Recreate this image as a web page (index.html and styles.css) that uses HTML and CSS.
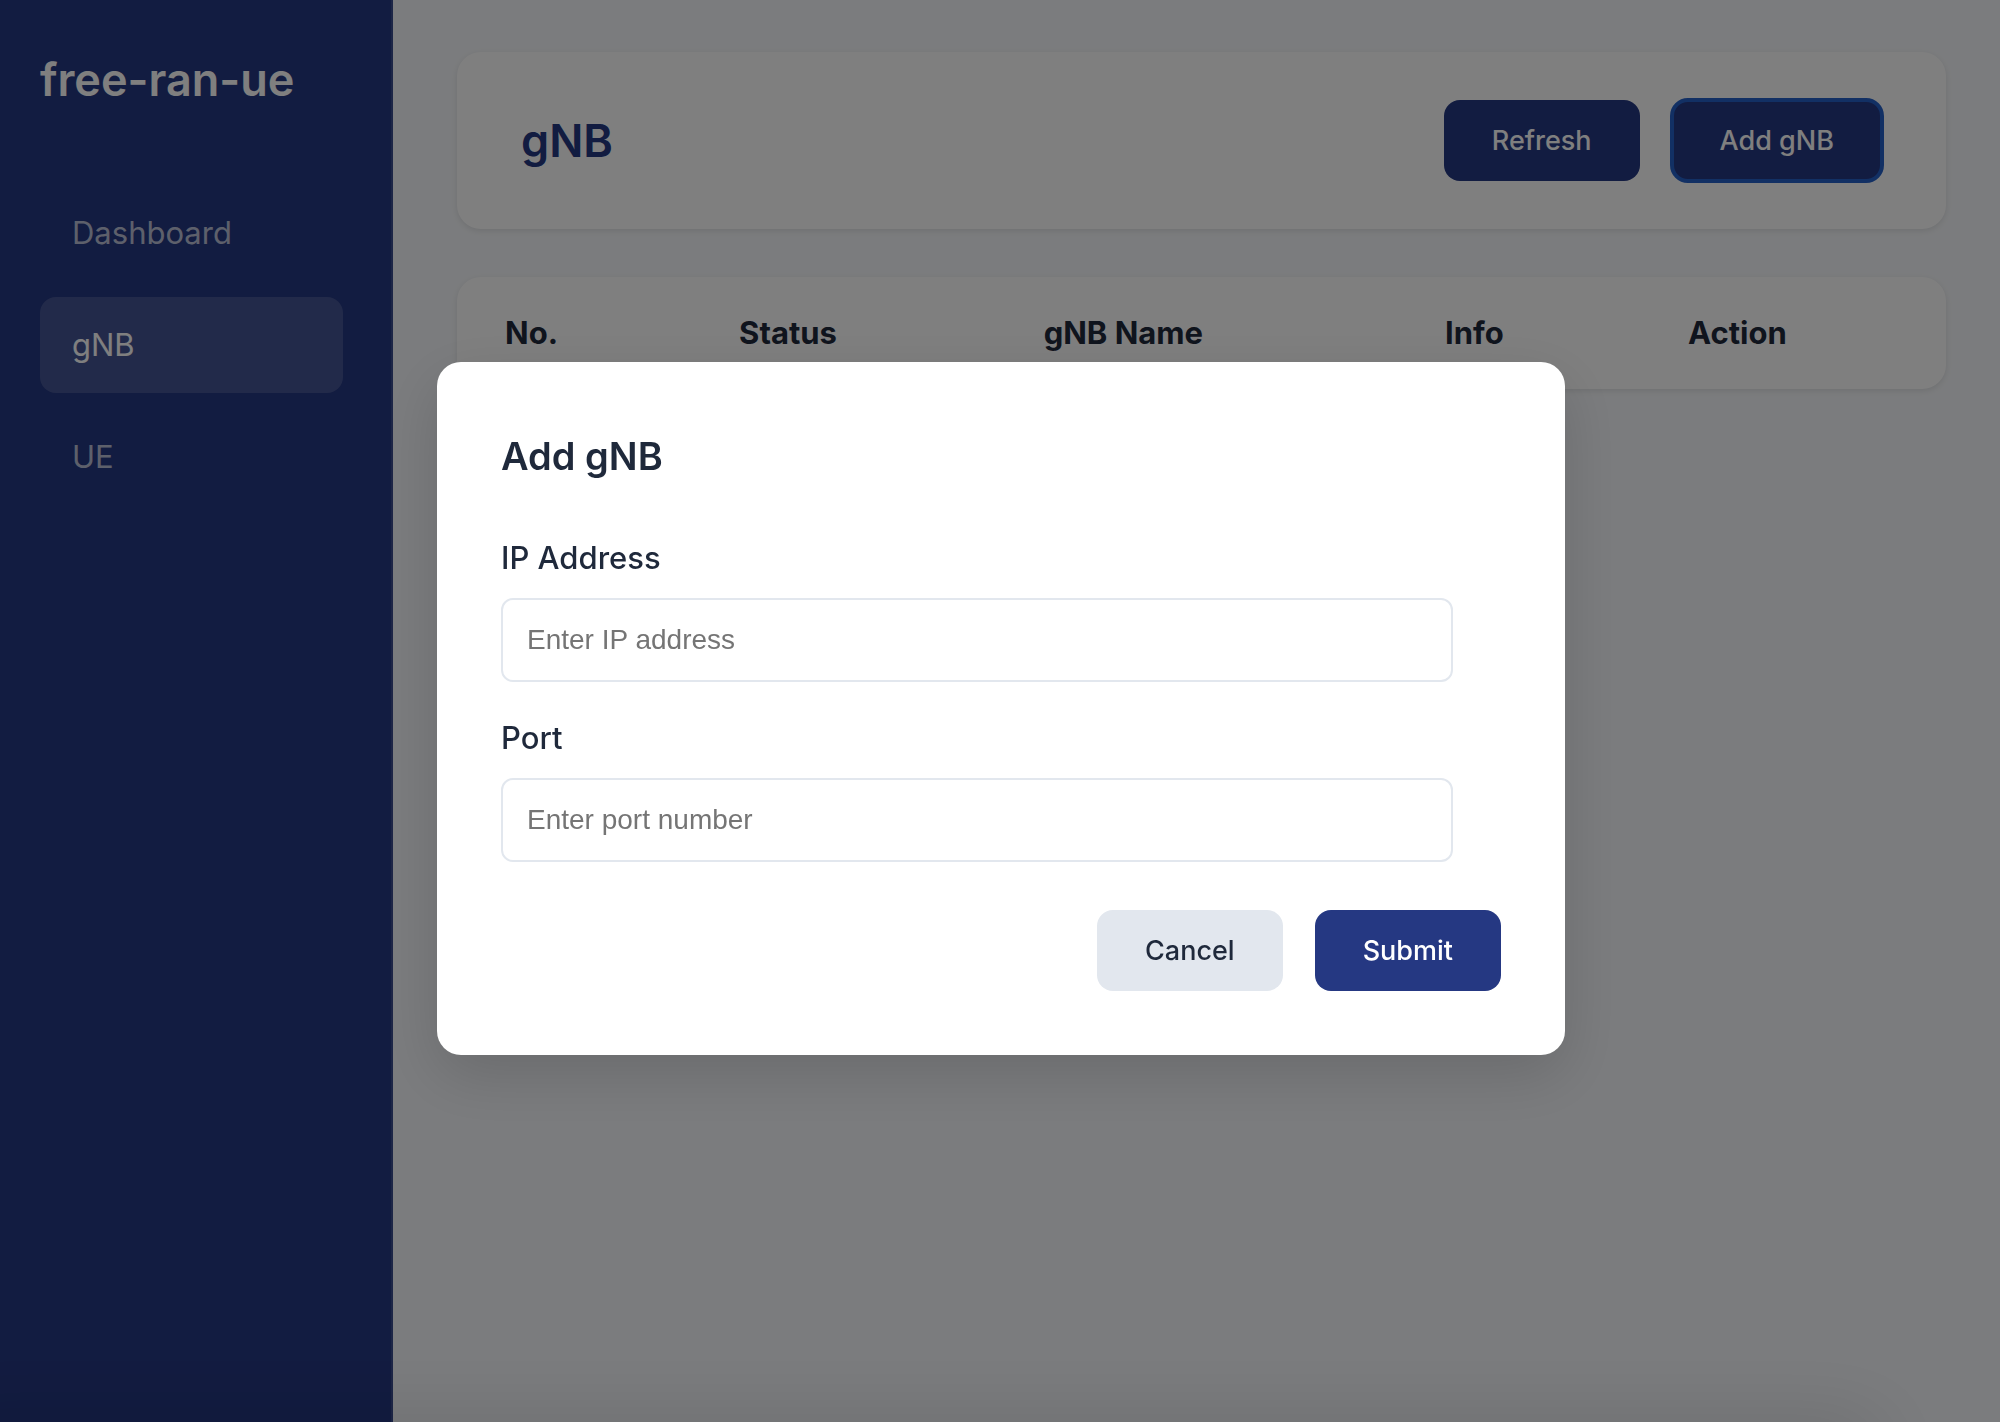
FILE: index.html
```html
<!DOCTYPE html>
<html lang="en">
<head>
  <meta charset="utf-8">
  <meta name="viewport" content="width=device-width, initial-scale=1">
  <title>free-ran-ue</title>
  <link rel="stylesheet" href="styles.css">
</head>
<body>
  <div class="app">
    <aside class="sidebar">
      <h2 class="brand">free-ran-ue</h2>
      <nav class="nav">
        <a class="nav-item" href="#dashboard">Dashboard</a>
        <a class="nav-item active" href="#gnb" aria-current="page">gNB</a>
        <a class="nav-item" href="#ue">UE</a>
      </nav>
    </aside>
    <main class="content">
      <header class="card page-header">
        <h1 class="page-title">gNB</h1>
        <div class="header-actions">
          <button class="button primary" type="button">Refresh</button>
          <button class="button primary focused" type="button">Add gNB</button>
        </div>
      </header>
      <section class="card">
        <table class="table">
          <thead>
            <tr>
              <th scope="col">No.</th>
              <th scope="col">Status</th>
              <th scope="col">gNB Name</th>
              <th scope="col">Info</th>
              <th scope="col">Action</th>
            </tr>
          </thead>
          <tbody></tbody>
        </table>
      </section>
    </main>
  </div>

  <div class="overlay">
    <form class="modal" role="dialog" aria-modal="true" aria-labelledby="modal-title">
      <h3 class="modal-title" id="modal-title">Add gNB</h3>
      <div class="field">
        <label for="ip">IP Address</label>
        <input id="ip" type="text" placeholder="Enter IP address">
      </div>
      <div class="field">
        <label for="port">Port</label>
        <input id="port" type="text" placeholder="Enter port number">
      </div>
      <div class="modal-actions">
        <button class="button secondary" type="button">Cancel</button>
        <button class="button primary" type="submit">Submit</button>
      </div>
    </form>
  </div>
</body>
</html>
```

FILE: styles.css
```css
:root {
  --primary: #253882;
  --text: #1f293b;
  --border: #e2e7ee;
  --background: #f7f9fc;
}

body {
  margin: 0;
  font-family: Inter, "Liberation Sans", sans-serif;
  font-size: 31px;
  line-height: 48px;
  color: var(--text);
  background: var(--background);
}

h1,
h2,
h3 {
  margin: 0;
  font-weight: 600;
}

.app {
  display: flex;
  min-height: 100vh;
}

/* Sidebar */
.sidebar {
  box-sizing: border-box;
  flex: 0 0 393px;
  padding: 44px 48px 44px 40px;
  color: #fff;
  background: var(--primary);
  border-right: 2px solid rgba(255, 255, 255, 0.1);
}

.brand {
  margin-bottom: 69px;
  font-size: 45px;
  line-height: 72px;
}

.nav {
  display: flex;
  flex-direction: column;
  gap: 16px;
}

.nav-item {
  padding: 24px 32px;
  color: rgba(255, 255, 255, 0.7);
  text-decoration: none;
  border-radius: 16px;
}

.nav-item.active {
  color: #fff;
  background: rgba(255, 255, 255, 0.15);
}

/* Page */
.content {
  display: flex;
  flex: 1;
  flex-direction: column;
  gap: 48px;
  padding: 52px 54px 52px 64px;
}

.card {
  background: #fff;
  border-radius: 24px;
  box-shadow: 0 2px 6px rgba(0, 0, 0, 0.1);
}

.page-header {
  display: flex;
  align-items: center;
  justify-content: space-between;
  padding: 48px 64px;
}

.page-title {
  font-size: 45px;
  line-height: 72px;
  color: var(--primary);
}

.header-actions {
  display: flex;
  gap: 32px;
}

.table {
  width: 100%;
  border-collapse: collapse;
}

.table th {
  padding: 32px 48px;
  font-weight: 700;
  text-align: left;
}

/* Buttons */
.button {
  padding: 24px 48px;
  font-family: inherit;
  font-size: 27px;
  font-weight: 500;
  line-height: 33px;
  border: 0;
  border-radius: 16px;
}

.button.primary {
  color: #fff;
  background: var(--primary);
}

.button.secondary {
  color: var(--text);
  background: var(--border);
}

.button.focused {
  outline: 4px solid #2460c8;
  outline-offset: -2px;
}

/* Dialog */
.overlay {
  position: fixed;
  inset: 0;
  display: flex;
  align-items: center;
  justify-content: center;
  padding: 0 0 6px 2px;
  overflow: hidden;
  background: rgba(0, 0, 0, 0.5);
}

/* Soft shade along the lower edge of the window */
.overlay::after {
  content: "";
  position: absolute;
  top: 100%;
  right: 120px;
  left: -60px;
  height: 60px;
  box-shadow: 0 0 80px rgba(0, 0, 0, 0.14);
}

.modal {
  box-sizing: border-box;
  width: 1128px;
  max-width: 90%;
  padding: 64px;
  background: #fff;
  border-radius: 24px;
  box-shadow: 0 20px 60px rgba(0, 0, 0, 0.14);
}

.modal-title {
  margin-bottom: 48px;
  font-size: 38px;
  line-height: 60px;
}

.field {
  display: flex;
  flex-direction: column;
  gap: 16px;
  margin-bottom: 32px;
}

.field label {
  font-weight: 500;
}

.field input {
  width: 90%;
  padding: 24px;
  font-family: "Liberation Sans", sans-serif;
  font-size: 28px;
  line-height: 32px;
  color: var(--text);
  background: #fff;
  border: 2px solid var(--border);
  border-radius: 12px;
}

.field input::placeholder {
  color: #757575;
}

.modal-actions {
  display: flex;
  gap: 32px;
  justify-content: flex-end;
  margin-top: 48px;
}
```
